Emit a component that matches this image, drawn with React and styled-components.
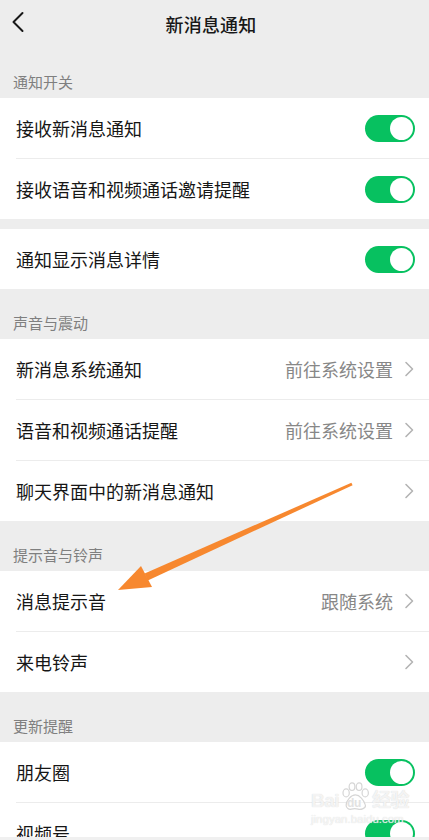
import React from 'react';
import styled, { createGlobalStyle } from 'styled-components';

const GlobalStyle = createGlobalStyle`
  html, body {
    margin: 0;
    padding: 0;
    background: #f0f0f0;
  }
  body {
    font-family: "Noto Sans CJK SC", "Noto Sans", sans-serif;
    -webkit-font-smoothing: antialiased;
  }
`;

const sections = [
  {
    label: '通知开关',
    rows: [
      { title: '接收新消息通知', toggle: true },
      { title: '接收语音和视频通话邀请提醒', toggle: true },
    ],
  },
  {
    rows: [{ title: '通知显示消息详情', toggle: true }],
  },
  {
    label: '声音与震动',
    rows: [
      { title: '新消息系统通知', value: '前往系统设置' },
      { title: '语音和视频通话提醒', value: '前往系统设置' },
      { title: '聊天界面中的新消息通知' },
    ],
  },
  {
    label: '提示音与铃声',
    rows: [
      { title: '消息提示音', value: '跟随系统' },
      { title: '来电铃声' },
    ],
  },
  {
    label: '更新提醒',
    rows: [
      { title: '朋友圈', toggle: true },
      { title: '视频号', toggle: true },
    ],
  },
];

export default function App() {
  return (
    <>
      <GlobalStyle />
      <Screen>
        <Header>
          <BackButton aria-label='back'>
            <svg width='14' height='22' viewBox='0 0 14 22'>
              <polyline points='11.5,2 2.5,11 11.5,20' fill='none' stroke='#181818' strokeWidth='2' strokeLinecap='round' strokeLinejoin='round' />
            </svg>
          </BackButton>
          <Title>新消息通知</Title>
        </Header>

        {sections.map((section, i) => (
          <React.Fragment key={i}>
            {section.label ? <SectionLabel>{section.label}</SectionLabel> : <Spacer />}
            <Group>
              {section.rows.map((row) => (
                <Row key={row.title}>
                  <RowTitle>{row.title}</RowTitle>
                  {row.toggle ? (
                    <Switch $on />
                  ) : (
                    <RowRight>
                      {row.value && <RowValue>{row.value}</RowValue>}
                      <Chevron width='12' height='16' viewBox='0 0 12 16'>
                        <polyline points='3,1.5 9.5,8 3,14.5' fill='none' stroke='#b4b4b4' strokeWidth='1.6' strokeLinecap='round' strokeLinejoin='round' />
                      </Chevron>
                    </RowRight>
                  )}
                </Row>
              ))}
            </Group>
          </React.Fragment>
        ))}

        <Annotation width='429' height='840' viewBox='0 0 429 840'>
          <polygon points='352.6,485.2 351.4,482.8 144.6,573.4 147.8,580.4' fill='#f7882f' />
          <polygon points='118,590 141,566 152,587' fill='#f7882f' />
        </Annotation>

        <Watermark>
          <WatermarkLogo>
            Bai
            <Paw>
              <svg width='30' height='30' viewBox='0 0 22 22'>
                <g fill='rgba(255,255,255,0.7)' stroke='#d6d6d6' strokeWidth='0.9'>
                  <ellipse cx='4.5' cy='8' rx='2.3' ry='2.9' />
                  <ellipse cx='8.8' cy='3.4' rx='2.1' ry='2.7' />
                  <ellipse cx='14' cy='3.4' rx='2.1' ry='2.7' />
                  <ellipse cx='18.5' cy='8' rx='2.3' ry='2.9' />
                  <path d='M11.3 9.5c-3.2 0-6.8 4.2-6.8 7.5 0 2.2 2 3.4 3.8 2.9s3.3-.5 5 0S19.6 19.4 18.5 16.6c-1.1-3.2-4-7.1-7.2-7.1z' />
                </g>
              </svg>
              <PawText>du</PawText>
            </Paw>
            经验
          </WatermarkLogo>
          <WatermarkUrl>jingyan.baidu.com</WatermarkUrl>
        </Watermark>
      </Screen>
    </>
  );
}

const Screen = styled.div`
  position: relative;
  width: 429px;
  height: 837px;
  overflow: hidden;
  background: #ededed;
`;

const Header = styled.header`
  height: 48px;
  display: flex;
  align-items: center;
  justify-content: center;
  position: relative;
`;

const BackButton = styled.button`
  position: absolute;
  left: 11px;
  top: 11px;
  width: 16px;
  height: 24px;
  padding: 0;
  border: 0;
  background: none;
  display: flex;
`;

const Title = styled.h1`
  margin: 0 7px 0 0;
  font-size: 18px;
  font-weight: 500;
  color: #181818;
  letter-spacing: 0.2px;
`;

const SectionLabel = styled.div`
  height: 50px;
  box-sizing: border-box;
  display: flex;
  align-items: flex-end;
  padding: 0 0 7px 13px;
  font-size: 15px;
  line-height: 18px;
  color: #7f7f7f;
`;

const Spacer = styled.div`
  height: 10px;
`;

const Group = styled.section`
  background: #fff;
`;

const Row = styled.div`
  height: 60px;
  display: flex;
  align-items: center;
  justify-content: space-between;
  padding: 0 14px 0 16px;
  position: relative;

  & + & {
    border-top: 1px solid #ececec;
  }
  & + &::before {
    content: '';
    position: absolute;
    left: 0;
    top: -1px;
    width: 16px;
    height: 1px;
    background: #fff;
  }
`;

const RowTitle = styled.span`
  font-size: 18px;
  color: #161616;
  white-space: nowrap;
`;

const RowRight = styled.div`
  display: flex;
  align-items: center;
`;

const RowValue = styled.span`
  font-size: 18px;
  color: #878787;
  margin-right: 10px;
`;

const Chevron = styled.svg`
  display: block;
`;

const Switch = styled.span`
  width: 50px;
  height: 27px;
  border-radius: 14px;
  background: ${(p) => (p.$on ? '#07c160' : '#e5e5e5')};
  position: relative;
  flex-shrink: 0;

  &::after {
    content: '';
    position: absolute;
    top: 2px;
    left: ${(p) => (p.$on ? '25px' : '2px')};
    width: 23px;
    height: 23px;
    border-radius: 50%;
    background: #fff;
  }
`;

const Annotation = styled.svg`
  position: absolute;
  left: 0;
  top: 0;
  pointer-events: none;
`;

const Watermark = styled.div`
  position: absolute;
  left: 311px;
  top: 782px;
  display: flex;
  flex-direction: column;
  align-items: flex-start;
  pointer-events: none;
  font-family: "Liberation Sans", "Noto Sans CJK SC", sans-serif;
  color: rgba(255, 255, 255, 0.75);
  text-shadow: 0 0 1px #cfcfcf;
`;

const WatermarkLogo = styled.div`
  display: flex;
  align-items: flex-end;
  font-size: 19px;
  font-weight: bold;
  line-height: 22px;
  letter-spacing: -0.5px;
`;

const Paw = styled.span`
  position: relative;
  display: flex;
  margin: 0 2px 0 1px;
`;

const PawText = styled.span`
  position: absolute;
  left: 7px;
  bottom: 2px;
  font-size: 12px;
  line-height: 14px;
  color: #e2e2e2;
  text-shadow: none;
`;

const WatermarkUrl = styled.div`
  font-size: 11.5px;
  line-height: 14px;
  margin-top: 0;
`;
